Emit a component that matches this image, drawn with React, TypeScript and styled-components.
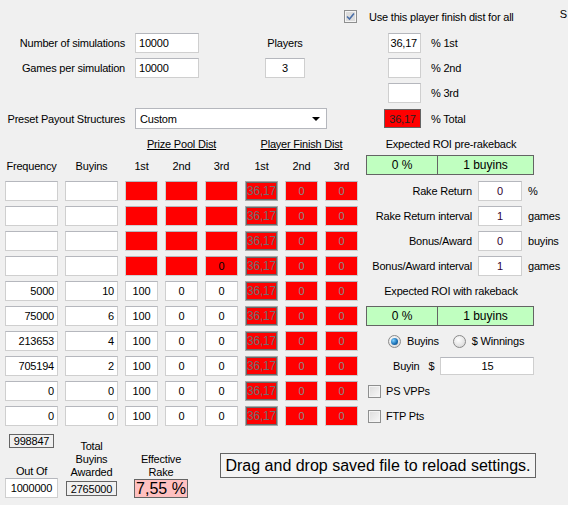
import styled, { createGlobalStyle } from 'styled-components';

const GlobalStyle = createGlobalStyle`
  html, body {
    margin: 0;
    padding: 0;
    background: #f0f0f0;
  }
  body {
    font-family: 'Liberation Sans', Arial, sans-serif;
    font-size: 11px;
    letter-spacing: -0.2px;
    color: #000;
  }
`;

type Align = 'left' | 'center' | 'right';
type Variant = 'plain' | 'red' | 'locked' | 'disabled' | 'total' | 'framed';

interface Row {
  freq: string;
  buyins: string;
  prize: string[];
  bad?: boolean;
}

const rows: Row[] = [
  { freq: '', buyins: '', prize: ['', '', ''], bad: true },
  { freq: '', buyins: '', prize: ['', '', ''], bad: true },
  { freq: '', buyins: '', prize: ['', '', ''], bad: true },
  { freq: '', buyins: '', prize: ['', '', '0'], bad: true },
  { freq: '5000', buyins: '10', prize: ['100', '0', '0'] },
  { freq: '75000', buyins: '6', prize: ['100', '0', '0'] },
  { freq: '213653', buyins: '4', prize: ['100', '0', '0'] },
  { freq: '705194', buyins: '2', prize: ['100', '0', '0'] },
  { freq: '0', buyins: '0', prize: ['100', '0', '0'] },
  { freq: '0', buyins: '0', prize: ['100', '0', '0'] },
];

const rakeRows = [
  { label: 'Rake Return', value: '0', unit: '%' },
  { label: 'Rake Return interval', value: '1', unit: 'games' },
  { label: 'Bonus/Award', value: '0', unit: 'buyins' },
  { label: 'Bonus/Award interval', value: '1', unit: 'games' },
];

const Form = styled.div`
  width: 568px;
  height: 505px;
  overflow: hidden;
`;

const CheckRow = styled.div`
  display: flex;
  align-items: center;
  height: 13px;
  margin-top: 10px;
  padding-left: 344px;
  gap: 12px;
  white-space: nowrap;
`;

const CutLabel = styled.span`
  margin-left: auto;
  margin-right: 1px;
  position: relative;
  top: -3px;
`;

const TopGrid = styled.div`
  display: grid;
  grid-template-columns: 135px 64px 66px 40px 79px 37px auto;
  grid-template-rows: 20px 20px 20px 21px;
  row-gap: 5px;
  margin-top: 10px;
  align-items: center;
`;

const FieldLabel = styled.div`
  text-align: right;
  padding-right: 10px;
  white-space: nowrap;
`;

const UnitLabel = styled.div`
  padding-left: 10px;
  white-space: nowrap;
`;

const CenterLabel = styled.div`
  text-align: center;
  white-space: nowrap;
`;

const TextBox = styled.div<{ $align?: Align; $variant?: Variant; $w?: number; $h?: number }>`
  box-sizing: border-box;
  height: ${(p) => p.$h ?? 20}px;
  width: ${(p) => (p.$w ? `${p.$w}px` : 'auto')};
  display: flex;
  align-items: center;
  justify-content: ${(p) =>
    p.$align === 'right' ? 'flex-end' : p.$align === 'center' ? 'center' : 'flex-start'};
  padding: 0 3px;
  white-space: nowrap;
  border: 1px solid #cfcfcf;
  border-top-color: #b5b7bd;
  background: #fff;
  color: #000;
  ${(p) =>
    p.$variant === 'red' &&
    `
    background: #ff0000;
  `}
  ${(p) =>
    p.$variant === 'disabled' &&
    `
    background: #ff0000;
    color: #8a8a8a;
  `}
  ${(p) =>
    p.$variant === 'locked' &&
    `
    background: #ff0000;
    color: #6e6e6e;
    border-color: #a8a8a8;
    box-shadow: inset 0 0 0 1px #696969;
    font-size: 12px;
  `}
  ${(p) =>
    p.$variant === 'total' &&
    `
    background: #ff0000;
    border-color: #646464;
    color: #222;
  `}
  ${(p) =>
    p.$variant === 'framed' &&
    `
    background: #f0f0f0;
    border-color: #646464;
  `}
`;

const Combo = styled.div`
  grid-column: 2 / 6;
  width: 192px;
  height: 21px;
  box-sizing: border-box;
  border: 1px solid #b5b7bd;
  background: #fff;
  display: flex;
  align-items: center;
  justify-content: space-between;
  padding: 0 6px 0 4px;
`;

const Arrow = styled.span`
  width: 0;
  height: 0;
  border-left: 4px solid transparent;
  border-right: 4px solid transparent;
  border-top: 4px solid #000;
`;

const CheckBox = styled.span<{ $checked?: boolean }>`
  box-sizing: border-box;
  width: 13px;
  height: 13px;
  flex: none;
  border: 1px solid #8e8f8f;
  background: ${(p) =>
    p.$checked ? '#dcdcdc' : 'linear-gradient(135deg, #dcdcdc 0%, #f8f8f8 100%)'};
  box-shadow: inset 0 0 0 1px #f4f4f4;
  display: flex;
  align-items: center;
  justify-content: center;
`;

const MainGrid = styled.div`
  display: grid;
  grid-template-columns: 53px 53px repeat(6, 33px) 170px;
  grid-template-rows: 13px 21px repeat(10, 20px);
  column-gap: 7px;
  row-gap: 5px;
  margin-top: 8px;
  padding-left: 5px;
  align-items: center;
`;

const GroupTitle = styled.div<{ $span: string }>`
  grid-column: ${(p) => p.$span};
  text-align: center;
  text-decoration: underline;
  white-space: nowrap;
`;

const ColHead = styled.div`
  text-align: center;
  white-space: nowrap;
`;

const PanelTitle = styled.div`
  grid-column: 9;
  text-align: center;
  white-space: nowrap;
  padding-left: 2px;
`;

const RoiBox = styled.div`
  grid-column: 9;
  align-self: start;
  box-sizing: border-box;
  height: 20px;
  margin-left: 1px;
  width: 168px;
  display: grid;
  grid-template-columns: 70px 1fr;
  border: 1px solid #646464;
  background: #c0ffc0;
  font-size: 12px;
  letter-spacing: 0;
`;

const RoiCell = styled.div`
  display: flex;
  align-items: center;
  justify-content: center;
  & + & {
    border-left: 1px solid #646464;
  }
`;

const RakeRow = styled.div`
  grid-column: 9;
  display: grid;
  grid-template-columns: 107px 44px auto;
  column-gap: 6px;
  align-items: center;
  white-space: nowrap;
`;

const RakeLabel = styled.div`
  text-align: right;
`;

const RakeValue = styled(TextBox)`
  color: #300030;
`;

const RadioRow = styled.div`
  grid-column: 9;
  display: flex;
  align-items: center;
  padding-left: 23px;
  white-space: nowrap;
`;

const RadioOption = styled.span`
  display: flex;
  align-items: center;
  gap: 6px;
  & + & {
    margin-left: 14px;
  }
`;

const Radio = styled.span<{ $on?: boolean }>`
  box-sizing: border-box;
  width: 13px;
  height: 13px;
  border-radius: 50%;
  border: 1px solid #8a8a8a;
  background: radial-gradient(circle at 40% 35%, #ffffff 0%, #e4e4e4 60%, #cfcfcf 100%);
  display: flex;
  align-items: center;
  justify-content: center;
  &::after {
    content: '';
    display: ${(p) => (p.$on ? 'block' : 'none')};
    width: 7px;
    height: 7px;
    border-radius: 50%;
    background: radial-gradient(circle at 35% 35%, #7fd0ff 0%, #1b73b8 55%, #0c3d6c 100%);
  }
`;

const BuyinRow = styled.div`
  grid-column: 9;
  display: flex;
  align-items: center;
  padding-left: 28px;
  white-space: nowrap;
`;

const Dollar = styled.span`
  margin-left: 9px;
  margin-right: 6px;
`;

const CheckOption = styled.div`
  grid-column: 9;
  display: flex;
  align-items: center;
  gap: 5px;
  padding-left: 3px;
  white-space: nowrap;
`;

const Bottom = styled.div`
  display: flex;
  height: 72px;
`;

const BottomCol = styled.div<{ $left: number; $w: number }>`
  display: flex;
  flex-direction: column;
  justify-content: flex-end;
  margin-left: ${(p) => p.$left}px;
  width: ${(p) => p.$w}px;
`;

const BottomLabel = styled.div`
  text-align: center;
  line-height: 13px;
  white-space: nowrap;
`;

const CountBox = styled(TextBox)`
  margin: 8px 0 auto 4px;
`;

const RakeBox = styled(TextBox)`
  background: #ffc0c0;
  border-color: #646464;
  font-size: 16px;
  letter-spacing: 0;
`;

const DropBox = styled.div`
  margin-left: 32px;
  margin-top: 27px;
  width: 316px;
  height: 25px;
  box-sizing: border-box;
  border: 1px solid #646464;
  background: #f4f4f4;
  display: flex;
  align-items: center;
  justify-content: center;
  font-size: 16px;
  letter-spacing: 0;
  white-space: nowrap;
`;

const Tick = () => (
  <svg width="9" height="9" viewBox="0 0 9 9">
    <path d="M1 4.5 L3.5 7 L8 1.5" fill="none" stroke="#4a6fa8" strokeWidth="1.6" />
  </svg>
);

export default function App() {
  return (
    <Form>
      <GlobalStyle />
      <CheckRow>
        <CheckBox $checked>
          <Tick />
        </CheckBox>
        <span>Use this player finish dist for all</span>
        <CutLabel>S</CutLabel>
      </CheckRow>

      <TopGrid>
        <FieldLabel>Number of simulations</FieldLabel>
        <TextBox>10000</TextBox>
        <div />
        <CenterLabel>Players</CenterLabel>
        <div />
        <TextBox $w={33} $align="right" style={{ justifySelf: 'end' }}>
          36,17
        </TextBox>
        <UnitLabel>% 1st</UnitLabel>

        <FieldLabel>Games per simulation</FieldLabel>
        <TextBox>10000</TextBox>
        <div />
        <TextBox $align="center">3</TextBox>
        <div />
        <TextBox $w={33} style={{ justifySelf: 'end' }} />
        <UnitLabel>% 2nd</UnitLabel>

        <div />
        <div />
        <div />
        <div />
        <div />
        <TextBox $w={33} style={{ justifySelf: 'end' }} />
        <UnitLabel>% 3rd</UnitLabel>

        <FieldLabel>Preset Payout Structures</FieldLabel>
        <Combo>
          <span>Custom</span>
          <Arrow />
        </Combo>
        <TextBox $variant="total" $align="center" $h={19}>
          36,17
        </TextBox>
        <UnitLabel>% Total</UnitLabel>
      </TopGrid>

      <MainGrid>
        <div style={{ gridColumn: '1 / 3' }} />
        <GroupTitle $span="3 / 6">Prize Pool Dist</GroupTitle>
        <GroupTitle $span="6 / 9">Player Finish Dist</GroupTitle>
        <PanelTitle>Expected ROI pre-rakeback</PanelTitle>

        <ColHead>Frequency</ColHead>
        <ColHead>Buyins</ColHead>
        <ColHead>1st</ColHead>
        <ColHead>2nd</ColHead>
        <ColHead>3rd</ColHead>
        <ColHead>1st</ColHead>
        <ColHead>2nd</ColHead>
        <ColHead>3rd</ColHead>
        <RoiBox>
          <RoiCell>0 %</RoiCell>
          <RoiCell>1 buyins</RoiCell>
        </RoiBox>

        {rows.map((r, i) => (
          <>
            <TextBox key={`f${i}`} $align="right">
              {r.freq}
            </TextBox>
            <TextBox key={`b${i}`} $align="right">
              {r.buyins}
            </TextBox>
            {r.prize.map((p, j) => (
              <TextBox key={`p${i}${j}`} $align="center" $variant={r.bad ? 'red' : 'plain'}>
                {p}
              </TextBox>
            ))}
            <TextBox key={`d${i}`} $align="center" $variant="locked">
              36,17
            </TextBox>
            <TextBox key={`e${i}`} $align="center" $variant="disabled">
              0
            </TextBox>
            <TextBox key={`g${i}`} $align="center" $variant="disabled">
              0
            </TextBox>
            {i < 4 && (
              <RakeRow key={`r${i}`}>
                <RakeLabel>{rakeRows[i].label}</RakeLabel>
                <RakeValue $align="center">{rakeRows[i].value}</RakeValue>
                <span>{rakeRows[i].unit}</span>
              </RakeRow>
            )}
            {i === 4 && <PanelTitle key="roi2">Expected ROI with rakeback</PanelTitle>}
            {i === 5 && (
              <RoiBox key="roibox2" style={{ alignSelf: 'center' }}>
                <RoiCell>0 %</RoiCell>
                <RoiCell>1 buyins</RoiCell>
              </RoiBox>
            )}
            {i === 6 && (
              <RadioRow key="radio">
                <RadioOption>
                  <Radio $on />
                  Buyins
                </RadioOption>
                <RadioOption>
                  <Radio />$ Winnings
                </RadioOption>
              </RadioRow>
            )}
            {i === 7 && (
              <BuyinRow key="buyin">
                Buyin
                <Dollar>$</Dollar>
                <TextBox $w={94} $h={18} $align="center">
                  15
                </TextBox>
              </BuyinRow>
            )}
            {i === 8 && (
              <CheckOption key="vpp">
                <CheckBox />
                PS VPPs
              </CheckOption>
            )}
            {i === 9 && (
              <CheckOption key="ftp">
                <CheckBox />
                FTP Pts
              </CheckOption>
            )}
          </>
        ))}
      </MainGrid>

      <Bottom>
        <BottomCol $left={5} $w={53}>
          <CountBox $variant="framed" $w={45} $h={14} $align="center">
            998847
          </CountBox>
          <BottomLabel>Out Of</BottomLabel>
          <TextBox $align="center">1000000</TextBox>
        </BottomCol>
        <BottomCol $left={8} $w={51}>
          <BottomLabel>
            Total
            <br />
            Buyins
            <br />
            Awarded
          </BottomLabel>
          <TextBox
            $variant="framed"
            $h={15}
            $align="center"
            style={{ marginTop: 2, marginBottom: 2 }}
          >
            2765000
          </TextBox>
        </BottomCol>
        <BottomCol $left={17} $w={54}>
          <BottomLabel>
            Effective
            <br />
            Rake
          </BottomLabel>
          <RakeBox $h={19} $align="center">
            7,55 %
          </RakeBox>
        </BottomCol>
        <DropBox>Drag and drop saved file to reload settings.</DropBox>
      </Bottom>
    </Form>
  );
}
